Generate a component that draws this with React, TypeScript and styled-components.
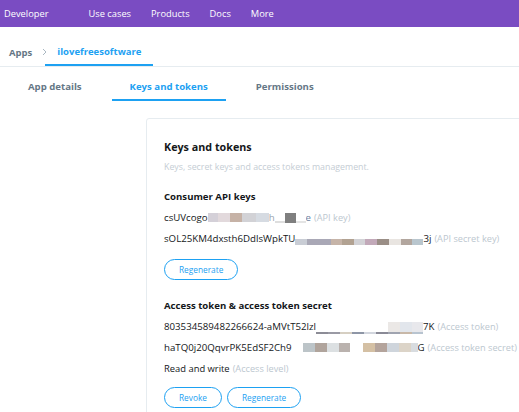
import React from 'react';
import styled, { createGlobalStyle } from 'styled-components';

const GlobalStyle = createGlobalStyle`
  html, body {
    margin: 0;
    padding: 0;
    background: #ffffff;
    overflow: hidden;
  }
  body {
    font-family: 'Open Sans', 'Liberation Sans', sans-serif;
    color: #14171a;
  }
`;

const TopBar = styled.nav`
  height: 27px;
  background: #7a4cc2;
  display: flex;
  align-items: center;
  padding-left: 4px;
  color: #ffffff;
  font-size: 9.3px;
  white-space: nowrap;
`;

const Brand = styled.span`
  margin-right: 40px;
`;

const NavLink = styled.span`
  margin-right: 20px;
`;

const Crumbs = styled.div`
  height: 40px;
  box-sizing: border-box;
  display: flex;
  align-items: stretch;
  padding: 11px 0 0 9px;
  border-bottom: 1px solid #e6ecf0;
  font-size: 9.5px;
  font-weight: 700;
`;

const CrumbText = styled.span`
  display: flex;
  align-items: center;
  color: #657786;
`;

const Chevron = styled.span`
  display: flex;
  align-items: center;
  margin-left: 10px;
`;

const CrumbActive = styled.span`
  display: flex;
  align-items: center;
  padding: 0 12px;
  margin-left: -2px;
  color: #1da1f2;
  border-bottom: 2px solid #1da1f2;
`;

const Tabs = styled.div`
  display: flex;
  gap: 12px;
  padding-left: 10px;
  height: 34px;
`;

const Tab = styled.span<{ $active?: boolean }>`
  display: flex;
  align-items: center;
  padding: 6px 18px 0;
  font-size: 9.6px;
  font-weight: 700;
  color: ${({ $active }) => ($active ? '#1da1f2' : '#657786')};
  border-bottom: 2px solid ${({ $active }) => ($active ? '#1da1f2' : 'transparent')};
`;

const Main = styled.main`
  padding: 17px 0 0 146px;
`;

const Card = styled.section`
  width: 560px;
  border: 1px solid #e6ecf0;
  border-radius: 3px 0 0 0;
  padding: 19px 17px 20px;
  white-space: nowrap;
`;

const Title = styled.h2`
  margin: 0;
  font-size: 10.75px;
  line-height: 18px;
  font-weight: 700;
`;

const Subtitle = styled.p`
  margin: 1px 0 0;
  font-size: 8.8px;
  line-height: 20px;
  color: #c5cdd4;
`;

const Section = styled.h3<{ $gap: number }>`
  margin: ${({ $gap }) => $gap}px 0 0;
  font-size: 9.6px;
  line-height: 20px;
  font-weight: 700;
`;

const Row = styled.div`
  display: flex;
  align-items: center;
  height: 21px;
  font-size: 9.4px;
`;

const Value = styled.span<{ $tint?: string }>`
  font-size: 9.7px;
  color: ${({ $tint }) => $tint || 'inherit'};
`;

const Hint = styled.span`
  margin-left: 3px;
  font-size: 9.2px;
  color: #bcc7cf;
`;

const Redaction = styled.span<{ $lift: number; $h: number }>`
  display: inline-flex;
  align-self: center;
  height: ${({ $h }) => $h}px;
  transform: translateY(${({ $lift }) => $lift}px);
`;

const Pixel = styled.span<{ $w: number; $c: string; $under?: string }>`
  width: ${({ $w }) => $w}px;
  height: 100%;
  background: ${({ $c }) => $c};
  box-shadow: ${({ $under }) => ($under ? `inset 0 -2px 0 ${$under}` : 'none')};
`;

const Spacer = styled.span<{ $w: number }>`
  width: ${({ $w }) => $w}px;
`;

const Buttons = styled.div<{ $gap: number }>`
  display: flex;
  gap: 5px;
  margin-top: ${({ $gap }) => $gap}px;
`;

const PillButton = styled.button`
  height: 21px;
  padding: 0 14px;
  border: 1px solid #1da1f2;
  border-radius: 11px;
  background: #ffffff;
  color: #1da1f2;
  font-family: inherit;
  font-size: 8.3px;
  line-height: 19px;
`;

type Block = [number, string, string?];

const Blur = ({ blocks, lift = 0, h = 9 }: { blocks: Block[]; lift?: number; h?: number }) => (
  <Redaction $lift={lift} $h={h}>
    {blocks.map(([w, c, u], i) => (
      <Pixel key={i} $w={w} $c={c} $under={u} />
    ))}
  </Redaction>
);

const ChevronIcon = () => (
  <svg width="5" height="8" viewBox="0 0 5 8">
    <polyline points="1,1 4,4 1,7" fill="none" stroke="#aab8c2" strokeWidth="1" />
  </svg>
);

const App: React.FC = () => (
  <>
    <GlobalStyle />
    <TopBar>
      <Brand>Developer</Brand>
      <NavLink>Use cases</NavLink>
      <NavLink>Products</NavLink>
      <NavLink>Docs</NavLink>
      <NavLink>More</NavLink>
    </TopBar>
    <Crumbs>
      <CrumbText>Apps</CrumbText>
      <Chevron>
        <ChevronIcon />
      </Chevron>
      <CrumbActive>ilovefreesoftware</CrumbActive>
    </Crumbs>
    <Tabs>
      <Tab>App details</Tab>
      <Tab $active>Keys and tokens</Tab>
      <Tab>Permissions</Tab>
    </Tabs>
    <Main>
      <Card>
        <Title>Keys and tokens</Title>
        <Subtitle>Keys, secret keys and access tokens management.</Subtitle>

        <Section $gap={10}>Consumer API keys</Section>
        <Row>
          <Value>csUVcogo</Value>
          <Blur
            blocks={[
              [10, '#d4d0d8'],
              [12, '#e2d9dc'],
              [12, '#c6b2a6'],
              [14, '#d2d2d6'],
              [13, '#d6dbe2'],
            ]}
          />
          <Value $tint="#9aa4b0">h</Value>
          <Blur
            h={10}
            blocks={[
              [10, '#ffffff', '#dedede'],
              [11, '#7f7f7f'],
              [10, '#ffffff', '#e4e4e4'],
            ]}
          />
          <Value $tint="#6d7fa0">e</Value>
          <Hint>(API key)</Hint>
        </Row>
        <Row>
          <Value>sOL25KM4dxsth6DdlsWpkTU</Value>
          <Blur
            lift={3}
            h={6}
            blocks={[
              [12, '#c9cdd5'],
              [12, '#a9a8b6'],
              [12, '#a9a8b6'],
              [11, '#c6b4a8'],
              [12, '#b2a292'],
              [11, '#d2d2d6'],
              [12, '#c2a9b9'],
              [12, '#9a8e86'],
              [12, '#e9e5e1'],
              [11, '#b2a69e'],
              [11, '#b9c6ce'],
            ]}
          />
          <Value>3j</Value>
          <Hint>(API secret key)</Hint>
        </Row>
        <Buttons $gap={10}>
          <PillButton>Regenerate</PillButton>
        </Buttons>

        <Section $gap={16}>Access token &amp; access token secret</Section>
        <Row>
          <Value>803534589482266624-aMVtT52lzl</Value>
          <Blur
            lift={1}
            h={12}
            blocks={[
              [12, '#ffffff', '#8c8c96'],
              [12, '#ffffff', '#9a9aa4'],
              [12, '#ffffff', '#d6cfc2'],
              [12, '#ffffff', '#8e96a6'],
              [12, '#ffffff', '#d2d6de'],
              [12, '#ffffff', '#8a8a96'],
              [12, '#ebe8e6', '#a0a4b0'],
              [12, '#e2e6ec', '#c8b8a8'],
              [11, '#e8e8ec', '#b8c4d0'],
            ]}
          />
          <Value>7K</Value>
          <Hint>(Access token)</Hint>
        </Row>
        <Row>
          <Value>haTQ0j20QqvrPK5EdSF2Ch9</Value>
          <Spacer $w={11} />
          <Blur
            h={9}
            blocks={[
              [12, '#bcc4c8'],
              [12, '#b0a49c'],
              [12, '#dce0e2'],
              [11, '#bab2ae'],
              [13, '#ffffff'],
              [12, '#d4c0a4'],
              [12, '#b4a49c'],
              [12, '#cfd5dc'],
              [12, '#dcd4c8'],
              [7, '#d8dce0'],
            ]}
          />
          <Value>G</Value>
          <Hint>(Access token secret)</Hint>
        </Row>
        <Row>
          Read and write
          <Hint>(Access level)</Hint>
        </Row>
        <Buttons $gap={8}>
          <PillButton>Revoke</PillButton>
          <PillButton>Regenerate</PillButton>
        </Buttons>
      </Card>
    </Main>
  </>
);

export default App;
